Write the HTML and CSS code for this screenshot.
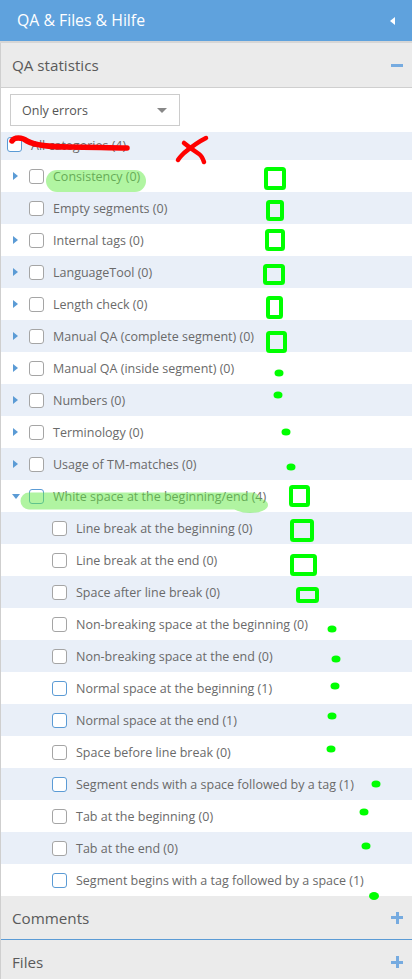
FILE: index.html
```html
<!DOCTYPE html>
<html>
<head>
<meta charset="utf-8">
<link rel="stylesheet" href="styles.css">
</head>
<body>
<div class="sidebar">
  <div class="topbar">
    <span class="title">QA &amp; Files &amp; Hilfe</span>
    <span class="tri-left"></span>
  </div>
  <div class="panel">
    <div class="panel-head open">
      <span class="head-text">QA statistics</span>
      <span class="minus"></span>
    </div>
    <div class="panel-body">
      <div class="select">
        <span>Only errors</span>
        <span class="caret"></span>
      </div>
      <ul class="tree">
        <li class="row root"><span class="cb blue"></span><span class="label">All categories (4)</span></li>
        <li class="row top"><span class="arrow"><span class="tri-right"></span></span><span class="cb"></span><span class="label">Consistency (0)</span></li>
        <li class="row top"><span class="arrow"></span><span class="cb"></span><span class="label">Empty segments (0)</span></li>
        <li class="row top"><span class="arrow"><span class="tri-right"></span></span><span class="cb"></span><span class="label">Internal tags (0)</span></li>
        <li class="row top"><span class="arrow"><span class="tri-right"></span></span><span class="cb"></span><span class="label">LanguageTool (0)</span></li>
        <li class="row top"><span class="arrow"><span class="tri-right"></span></span><span class="cb"></span><span class="label">Length check (0)</span></li>
        <li class="row top"><span class="arrow"><span class="tri-right"></span></span><span class="cb"></span><span class="label">Manual QA (complete segment) (0)</span></li>
        <li class="row top"><span class="arrow"><span class="tri-right"></span></span><span class="cb"></span><span class="label">Manual QA (inside segment) (0)</span></li>
        <li class="row top"><span class="arrow"><span class="tri-right"></span></span><span class="cb"></span><span class="label">Numbers (0)</span></li>
        <li class="row top"><span class="arrow"><span class="tri-right"></span></span><span class="cb"></span><span class="label">Terminology (0)</span></li>
        <li class="row top"><span class="arrow"><span class="tri-right"></span></span><span class="cb"></span><span class="label">Usage of TM-matches (0)</span></li>
        <li class="row top"><span class="arrow"><span class="tri-down"></span></span><span class="cb blue"></span><span class="label">White space at the beginning/end (4)</span></li>
        <li class="row sub"><span class="cb"></span><span class="label">Line break at the beginning (0)</span></li>
        <li class="row sub"><span class="cb"></span><span class="label">Line break at the end (0)</span></li>
        <li class="row sub"><span class="cb"></span><span class="label">Space after line break (0)</span></li>
        <li class="row sub"><span class="cb"></span><span class="label">Non-breaking space at the beginning (0)</span></li>
        <li class="row sub"><span class="cb"></span><span class="label">Non-breaking space at the end (0)</span></li>
        <li class="row sub"><span class="cb blue"></span><span class="label">Normal space at the beginning (1)</span></li>
        <li class="row sub"><span class="cb blue"></span><span class="label">Normal space at the end (1)</span></li>
        <li class="row sub"><span class="cb"></span><span class="label">Space before line break (0)</span></li>
        <li class="row sub"><span class="cb blue"></span><span class="label">Segment ends with a space followed by a tag (1)</span></li>
        <li class="row sub"><span class="cb"></span><span class="label">Tab at the beginning (0)</span></li>
        <li class="row sub"><span class="cb"></span><span class="label">Tab at the end (0)</span></li>
        <li class="row sub"><span class="cb blue"></span><span class="label">Segment begins with a tag followed by a space (1)</span></li>
      </ul>
    </div>
    <div class="panel-head closed active">
      <span class="head-text">Comments</span>
      <span class="plus"></span>
    </div>
    <div class="panel-head closed">
      <span class="head-text">Files</span>
      <span class="plus"></span>
    </div>
  </div>

  <svg class="annot" width="412" height="979" viewBox="0 0 412 979">
    <g opacity="0.5">
      <g fill="none" stroke="#64eb46" stroke-linecap="round" stroke-linejoin="round">
        <path d="M57 181 L135 181" stroke-width="22"/>
        <path d="M29 501 L252 501" stroke-width="17"/>
      </g>
      <ellipse cx="250" cy="505" rx="18" ry="8" fill="#64eb46"/>
    </g>
    <g fill="none" stroke="#ff0000" stroke-width="5.5" stroke-linecap="round" stroke-linejoin="round">
      <path d="M12 141 C14 137 22 137 27 141 C36 146 50 147 70 147 C90 147 110 148 127 148"/>
    </g>
    <g fill="none" stroke="#ff0000" stroke-width="4.5" stroke-linecap="round" stroke-linejoin="round">
      <path d="M206 138 C198 142 190 148 184 153 C181 156 179 158 178 160"/>
      <path d="M184 143 C190 148 196 152 199 154 C202 156 203 159 204 162"/>
    </g>
    <g fill="none" stroke="#00ff00" stroke-width="4" stroke-linejoin="round">
      <rect x="266" y="169" width="18" height="19" rx="1.5"/>
      <rect x="268" y="202" width="14" height="17" rx="1.5"/>
      <rect x="267" y="231" width="16" height="18" rx="1.5"/>
      <rect x="265" y="266" width="18" height="17" rx="1.5"/>
      <rect x="268" y="298" width="13" height="19" rx="1.5"/>
      <rect x="268" y="333" width="17" height="18" rx="1.5"/>
      <rect x="291" y="487" width="17" height="18" rx="1.5"/>
      <rect x="292" y="521" width="20" height="19" rx="1.5"/>
      <rect x="292" y="556" width="23" height="18" rx="1.5"/>
      <rect x="298" y="589" width="19" height="12" rx="1.5"/>
    </g>
    <g fill="#00ff00">
      <ellipse cx="279" cy="373" rx="4.5" ry="3.5"/>
      <ellipse cx="278" cy="395" rx="4.5" ry="3.5"/>
      <ellipse cx="286" cy="432" rx="4.5" ry="3.5"/>
      <ellipse cx="291" cy="467" rx="4.5" ry="3.5"/>
      <ellipse cx="332" cy="629" rx="4.5" ry="3.5"/>
      <ellipse cx="336" cy="659" rx="4.5" ry="3.5"/>
      <ellipse cx="335" cy="686" rx="4.5" ry="3.5"/>
      <ellipse cx="332" cy="716" rx="4.5" ry="3.5"/>
      <ellipse cx="331" cy="749" rx="4.5" ry="3.5"/>
      <ellipse cx="376" cy="784" rx="4.5" ry="3.5"/>
      <ellipse cx="364" cy="812" rx="4.5" ry="3.5"/>
      <ellipse cx="366" cy="846" rx="4.5" ry="3.5"/>
      <ellipse cx="374" cy="896" rx="5" ry="4"/>
    </g>
  </svg>
</div>
</body>
</html>
```
FILE: styles.css
```css
* { box-sizing: border-box; }
html, body { margin: 0; padding: 0; }
body {
  font-family: "Open Sans", "Liberation Sans", sans-serif;
  background: #ffffff;
  width: 412px;
  height: 979px;
  overflow: hidden;
}
.sidebar {
  position: relative;
  width: 412px;
  height: 979px;
}
.topbar {
  height: 43px;
  background: #5fa2dd;
  border-bottom: 2px solid #d6d6d6;
  display: flex;
  align-items: center;
  justify-content: space-between;
  padding: 0 17px 0 17px;
}
.title {
  color: #ffffff;
  font-size: 15.8px;
  line-height: 1;
}
.tri-left {
  width: 0;
  height: 0;
  border-top: 4px solid transparent;
  border-bottom: 4px solid transparent;
  border-right: 5px solid #ffffff;
}
.panel {
  border-left: 1px solid #cfcfcf;
}
.panel-head {
  height: 44px;
  background: #ebebeb;
  display: flex;
  align-items: center;
  justify-content: space-between;
  padding: 0 9px 0 11px;
}
.panel-head.open { border-bottom: 1px solid #cfcfcf; height: 45px; }
.panel-head.active { border-bottom: 1px solid #5b9bd5; }
.head-text {
  font-size: 15.2px;
  color: #5a5a5a;
}
.minus {
  width: 12px;
  height: 3px;
  background: #76abe0;
  margin-top: 1px;
}
.plus {
  position: relative;
  width: 12px;
  height: 12px;
}
.plus::before, .plus::after {
  content: "";
  position: absolute;
  background: #76abe0;
}
.plus::before { left: 0; top: 4.5px; width: 12px; height: 3px; }
.plus::after { left: 4.5px; top: 0; width: 3px; height: 12px; }
.panel-body {
  padding-top: 6px;
  background: #ffffff;
}
.select {
  margin-left: 9px;
  width: 170px;
  height: 32px;
  border: 1px solid #cccccc;
  display: flex;
  align-items: center;
  justify-content: space-between;
  padding: 0 12px 0 11px;
  font-size: 12.5px;
  color: #555555;
}
.caret {
  width: 0;
  height: 0;
  border-left: 5px solid transparent;
  border-right: 5px solid transparent;
  border-top: 5px solid #888888;
}
.tree {
  list-style: none;
  margin: 6px 0 0 0;
  padding: 0;
}
.row {
  height: 32px;
  display: flex;
  align-items: center;
  font-size: 12.5px;
  color: #6a6a6a;
  white-space: nowrap;
}
.tree .row:nth-child(odd) { background: #e9eff8; }
.row.root {
  height: 28px;
  padding-left: 6px;
  padding-bottom: 3px;
}
.row.root .cb { margin-right: 9px; }
.row.top { padding-left: 12px; }
.row.sub { padding-left: 51px; }
.arrow {
  width: 16px;
  height: 14px;
  display: flex;
  align-items: center;
}
.tri-right {
  width: 0;
  height: 0;
  border-top: 4px solid transparent;
  border-bottom: 4px solid transparent;
  border-left: 5px solid #5b9bd5;
}
.tri-down {
  width: 0;
  height: 0;
  margin-left: -1px;
  border-left: 4px solid transparent;
  border-right: 4px solid transparent;
  border-top: 5px solid #5b9bd5;
}
.cb {
  width: 15px;
  height: 15px;
  border: 1px solid #a5a5a5;
  border-radius: 3px;
  background: #ffffff;
  margin-right: 9px;
  flex: none;
}
.cb.blue { border-color: #5b9bd5; }
.label { line-height: 1; padding-top: 3px; }
.annot {
  position: absolute;
  left: 0;
  top: 0;
  pointer-events: none;
}
```
